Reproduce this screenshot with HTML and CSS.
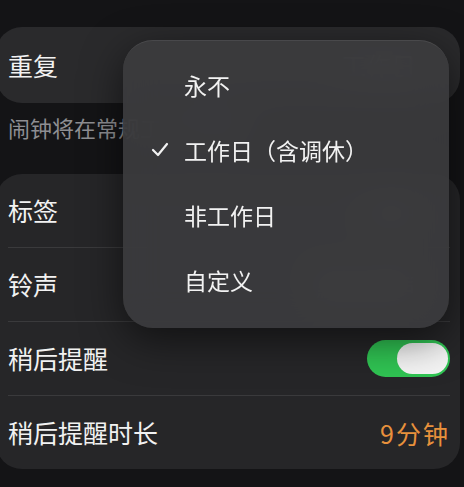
FILE: index.html
```html
<!DOCTYPE html>
<html lang="zh-CN">
<head>
  <meta charset="UTF-8">
  <title>闹钟 - 重复</title>
  <link rel="stylesheet" href="styles.css">
</head>
<body>

  <div class="screen">
    <div class="card top-card">
      <div class="row">
        <span class="label">重复</span>
        <span class="value">工作日</span>
      </div>
    </div>

    <p class="note">闹钟将在常规工作日响铃</p>

    <div class="card">
      <div class="row">
        <span class="label">标签</span>
        <span class="value">闹钟</span>
      </div>
      <div class="row">
        <span class="label">铃声</span>
        <span class="value light">默认铃声</span>
      </div>
      <div class="row">
        <span class="label">稍后提醒</span>
        <span class="switch on"><span class="knob"></span></span>
      </div>
      <div class="row">
        <span class="label">稍后提醒时长</span>
        <span class="orange">9分钟</span>
      </div>
    </div>

    <!-- popup menu over the repeat row -->
    <div class="menu">
      <div class="menu-item"><span class="check"></span>永不</div>
      <div class="menu-item">
        <span class="check">
          <svg width="18" height="15" viewBox="0 0 18 15"><path d="M2 8 L7 13 L16 2" fill="none" stroke="#f2f2f2" stroke-width="2.2" stroke-linecap="round" stroke-linejoin="round"/></svg>
        </span>工作日（含调休）
      </div>
      <div class="menu-item"><span class="check"></span>非工作日</div>
      <div class="menu-item"><span class="check"></span>自定义</div>
    </div>
  </div>

</body>
</html>
```

FILE: styles.css
```css
body {
  margin: 0;
  background-color: #141416;
  font-family: "Noto Sans CJK SC", "Noto Sans", sans-serif;
  color: #f2f2f2;
  overflow: hidden;
}

.screen {
  position: relative;
  width: 464px;
  height: 487px;
  padding-top: 27px;
  box-sizing: border-box;
}

.card {
  background-color: #262628;
  border-radius: 26px;
  margin: 0 4px 0 -4px;
  padding-left: 12px;
  padding-right: 10px;
}

.top-card {
  background-color: #2a2a2c;
}

.row {
  display: flex;
  align-items: center;
  justify-content: space-between;
  height: 73px;
  border-bottom: 1px solid #3a3a3c;
  font-size: 25px;
}

.row:last-child {
  border-bottom: none;
}

.top-card .row {
  height: 76px;
}

.label {
  line-height: 1;
}

.value {
  color: #7c7c80;
  font-size: 25px;
  padding-right: 34px;
}

.value.light {
  color: #9a9a9e;
}

.orange {
  color: #e8913c;
  letter-spacing: 2px;
}

.note {
  margin: 0;
  height: 71px;
  line-height: 48px;
  padding-left: 8px;
  font-size: 22px;
  color: #8e8e92;
}

.switch {
  position: relative;
  width: 83px;
  height: 37px;
  border-radius: 19px;
  background-color: #30c453;
}

.knob {
  position: absolute;
  top: 3px;
  right: 2px;
  width: 51px;
  height: 31px;
  border-radius: 16px;
  background-color: #f4f4f4;
}

.menu {
  position: absolute;
  left: 123px;
  top: 40px;
  width: 326px;
  height: 288px;
  box-sizing: border-box;
  padding: 11px 0 12px;
  border-radius: 30px;
  background-color: rgba(60, 60, 62, 0.9);
  backdrop-filter: blur(18px);
  box-shadow: 0 12px 40px rgba(0, 0, 0, 0.55);
  border-top: 1px solid rgba(255, 255, 255, 0.08);
}

.menu-item {
  display: flex;
  align-items: center;
  height: 65px;
  padding-left: 28px;
  font-size: 23px;
  color: #f2f2f2;
}

.check {
  display: inline-flex;
  align-items: center;
  width: 33px;
  height: 20px;
}
```
